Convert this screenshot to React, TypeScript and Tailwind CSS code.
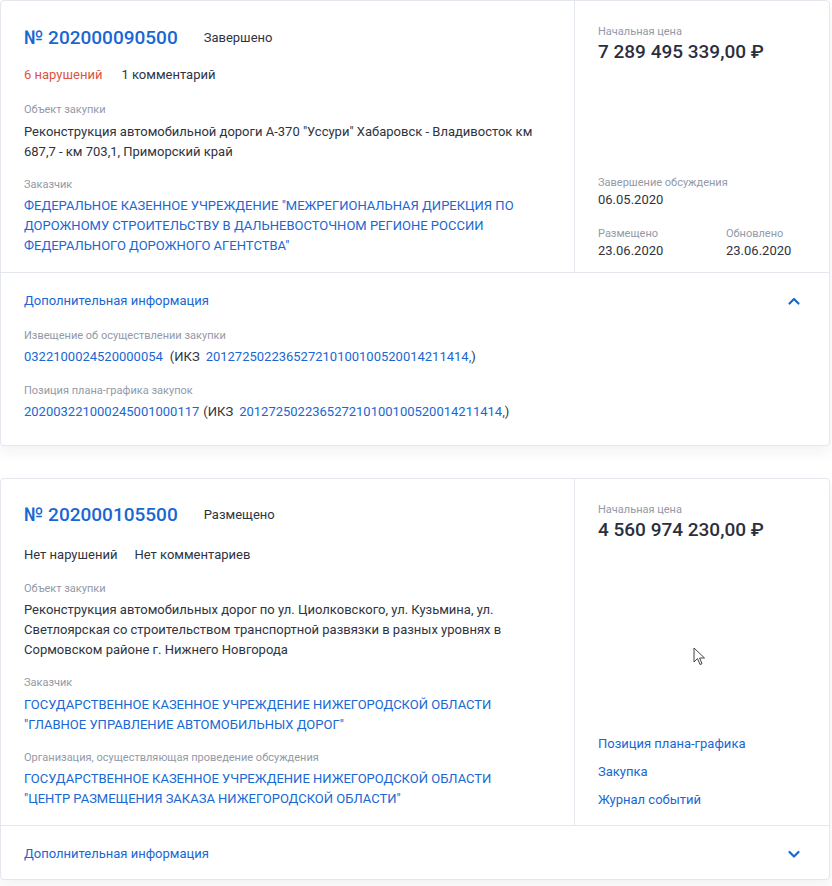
import React from "react";

const Label = ({ children, className = "" }: { children: React.ReactNode; className?: string }) => (
  <div className={`text-[11px] leading-4 text-[#9399a8] ${className}`}>{children}</div>
);

const ChevronUp = () => (
  <svg width="14" height="10" viewBox="0 0 14 10" fill="none">
    <path d="M2.5 7.5 L7 3 L11.5 7.5" stroke="#1967d2" strokeWidth="2.2" strokeLinecap="round" strokeLinejoin="round" />
  </svg>
);
const ChevronDown = () => (
  <svg width="14" height="10" viewBox="0 0 14 10" fill="none">
    <path d="M2.5 3 L7 7.5 L11.5 3" stroke="#1967d2" strokeWidth="2.2" strokeLinecap="round" strokeLinejoin="round" />
  </svg>
);

export default function App() {
  return (
    <div
      className="w-[832px] min-h-[886px] bg-white text-[13px] text-[#2f3340]"
      style={{ fontFamily: "Roboto, 'Noto Sans', Arial, sans-serif" }}
    >
      {/* Card 1 */}
      <div className="w-[830px] rounded border border-[#e4e7ee] bg-white shadow-[0_6px_14px_rgba(30,40,70,0.06)]">
        <div className="flex">
          <div className="flex-1 pl-[23px] pr-6 pt-[23px] pb-[16px]">
            <div className="flex items-center h-7">
              <span className="text-[19px] font-medium text-[#1967d2] leading-7">№ 202000090500</span>
              <span className="ml-[26px] text-[13px] text-[#2f3340]">Завершено</span>
            </div>
            <div className="mt-[13px] flex leading-5">
              <span className="text-[#e0533f]">6 нарушений</span>
              <span className="ml-[19px]">1 комментарий</span>
            </div>
            <Label className="mt-[17px]">Объект закупки</Label>
            <div className="mt-[4px] leading-5">
              Реконструкция автомобильной дороги А-370 "Уссури" Хабаровск - Владивосток км
              <br />
              687,7 - км 703,1, Приморский край
            </div>
            <Label className="mt-[15px]">Заказчик</Label>
            <div className="mt-[3px] leading-5 text-[#1967d2]">
              ФЕДЕРАЛЬНОЕ КАЗЕННОЕ УЧРЕЖДЕНИЕ "МЕЖРЕГИОНАЛЬНАЯ ДИРЕКЦИЯ ПО
              <br />
              ДОРОЖНОМУ СТРОИТЕЛЬСТВУ В ДАЛЬНЕВОСТОЧНОМ РЕГИОНЕ РОССИИ
              <br />
              ФЕДЕРАЛЬНОГО ДОРОЖНОГО АГЕНТСТВА"
            </div>
          </div>
          <div className="w-[255px] border-l border-[#e4e7ee] pl-[23px] pr-4 pt-[23px] pb-[12px] flex flex-col justify-between">
            <div>
              <Label>Начальная цена</Label>
              <div className="text-[19px] font-medium leading-6 text-[#2b2f3d]">7 289 495 339,00 ₽</div>
            </div>
            <div>
              <Label>Завершение обсуждения</Label>
              <div className="leading-[18px]">06.05.2020</div>
              <div className="mt-[17px] flex">
                <div className="w-32">
                  <Label>Размещено</Label>
                  <div className="leading-[18px]">23.06.2020</div>
                </div>
                <div>
                  <Label>Обновлено</Label>
                  <div className="leading-[18px]">23.06.2020</div>
                </div>
              </div>
            </div>
          </div>
        </div>
        <div className="border-t border-[#e4e7ee] pl-[23px] pr-[28px] pt-[18px] pb-[23px]">
          <div className="flex items-center justify-between leading-5">
            <span className="text-[#1967d2]">Дополнительная информация</span>
            <ChevronUp />
          </div>
          <Label className="mt-[17px]">Извещение об осуществлении закупки</Label>
          <div className="mt-[3px] leading-5">
            <span className="text-[#1967d2]">0322100024520000054</span>
            <span className="ml-[7px]">(ИКЗ</span>
            <span className="ml-[6px] text-[#1967d2]">201272502236527210100100520014211414,</span>)
          </div>
          <Label className="mt-4">Позиция плана-графика закупок</Label>
          <div className="mt-[3px] leading-5">
            <span className="text-[#1967d2]">202003221000245001000117</span>
            <span className="ml-[4px]">(ИКЗ</span>
            <span className="ml-[6px] text-[#1967d2]">201272502236527210100100520014211414,</span>)
          </div>
        </div>
      </div>

      {/* Card 2 */}
      <div className="relative mt-[32px] w-[830px] rounded border border-[#e4e7ee] bg-white shadow-[0_6px_14px_rgba(30,40,70,0.06)]">
        <div className="flex">
          <div className="flex-1 pl-[23px] pr-6 pt-[22px] pb-[16px]">
            <div className="flex items-center h-7">
              <span className="text-[19px] font-medium text-[#1967d2] leading-7">№ 202000105500</span>
              <span className="ml-[26px] text-[13px] text-[#2f3340]">Размещено</span>
            </div>
            <div className="mt-[16px] flex leading-5">
              <span>Нет нарушений</span>
              <span className="ml-[17px]">Нет комментариев</span>
            </div>
            <Label className="mt-4">Объект закупки</Label>
            <div className="mt-[3px] leading-5">
              Реконструкция автомобильных дорог по ул. Циолковского, ул. Кузьмина, ул.
              <br />
              Светлоярская со строительством транспортной развязки в разных уровнях в
              <br />
              Сормовском районе г. Нижнего Новгорода
            </div>
            <Label className="mt-[15px]">Заказчик</Label>
            <div className="mt-[4px] leading-5 text-[#1967d2]">
              ГОСУДАРСТВЕННОЕ КАЗЕННОЕ УЧРЕЖДЕНИЕ НИЖЕГОРОДСКОЙ ОБЛАСТИ
              <br />
              "ГЛАВНОЕ УПРАВЛЕНИЕ АВТОМОБИЛЬНЫХ ДОРОГ"
            </div>
            <Label className="mt-[15px]">Организация, осуществляющая проведение обсуждения</Label>
            <div className="mt-[3px] leading-5 text-[#1967d2]">
              ГОСУДАРСТВЕННОЕ КАЗЕННОЕ УЧРЕЖДЕНИЕ НИЖЕГОРОДСКОЙ ОБЛАСТИ
              <br />
              "ЦЕНТР РАЗМЕЩЕНИЯ ЗАКАЗА НИЖЕГОРОДСКОЙ ОБЛАСТИ"
            </div>
          </div>
          <div className="w-[255px] border-l border-[#e4e7ee] pl-[23px] pr-4 pt-[23px] pb-[15px] flex flex-col justify-between">
            <div>
              <Label>Начальная цена</Label>
              <div className="text-[19px] font-medium leading-6 text-[#2b2f3d]">4 560 974 230,00 ₽</div>
            </div>
            <div className="flex flex-col gap-2 leading-5 text-[#1967d2]">
              <span>Позиция плана-графика</span>
              <span>Закупка</span>
              <span>Журнал событий</span>
            </div>
          </div>
        </div>
        <div className="border-t border-[#e4e7ee] pl-[23px] pr-[28px] pt-[18px] pb-[15px]">
          <div className="flex items-center justify-between leading-5">
            <span className="text-[#1967d2]">Дополнительная информация</span>
            <ChevronDown />
          </div>
        </div>
        {/* mouse cursor */}
        <svg className="absolute left-[692px] top-[168px]" width="13" height="19" viewBox="0 0 13 19">
          <path d="M1 1 L1 15 L4.5 11.5 L7 17.5 L9 16.7 L6.6 11 L11.5 11 Z" fill="#ffffff" stroke="#444" strokeWidth="1" strokeLinejoin="round" />
        </svg>
      </div>
    </div>
  );
}
